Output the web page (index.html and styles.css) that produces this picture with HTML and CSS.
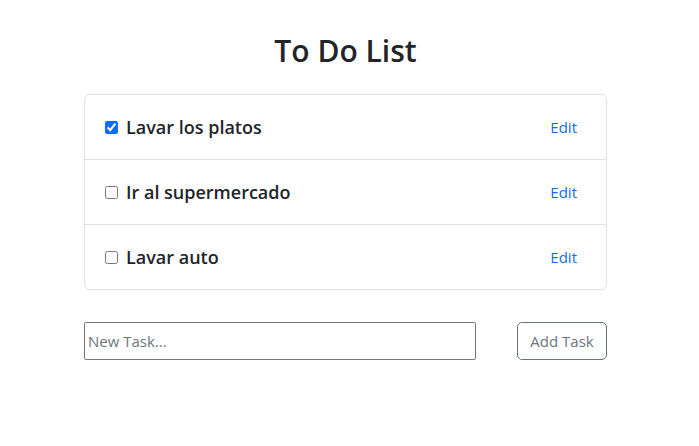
FILE: index.html
```html
<!DOCTYPE html>
<html lang="es">
<head>
<meta charset="utf-8">
<title>To Do List</title>
<link rel="stylesheet" href="styles.css">
</head>
<body>
<div class="app">
  <h1 class="title">To Do List</h1>
  <ul class="list">
    <li class="item">
      <label class="task"><input type="checkbox" class="check" checked><span>Lavar los platos</span></label>
      <a class="edit" href="#">Edit</a>
    </li>
    <li class="item">
      <label class="task"><input type="checkbox" class="check"><span>Ir al supermercado</span></label>
      <a class="edit" href="#">Edit</a>
    </li>
    <li class="item">
      <label class="task"><input type="checkbox" class="check"><span>Lavar auto</span></label>
      <a class="edit" href="#">Edit</a>
    </li>
  </ul>
  <form class="new-row">
    <input class="new-input" type="text" placeholder="New Task...">
    <button class="add-btn" type="button">Add Task</button>
  </form>
</div>
</body>
</html>
```

FILE: styles.css
```css
* { box-sizing: border-box; }
body {
  margin: 0;
  font-family: "Open Sans", "Noto Sans", sans-serif;
  color: #212529;
  background: #fff;
}
.app {
  width: 523px;
  margin-left: 84px;
  padding-top: 31px;
}
.title {
  margin: 0 0 23px;
  text-align: center;
  font-size: 30px;
  font-weight: 600;
  line-height: 40px;
}
.list {
  list-style: none;
  margin: 0;
  padding: 0;
  border: 1px solid #dee2e6;
  border-radius: 6px;
}
.item {
  display: flex;
  align-items: center;
  justify-content: space-between;
  height: 65px;
  padding: 0 29px 0 19px;
  border-top: 1px solid #dee2e6;
}
.item:first-child { border-top: 0; height: 64px; }
.task {
  display: flex;
  align-items: center;
  font-size: 18px;
  font-weight: 600;
}
.check {
  width: 13px;
  height: 13px;
  margin: 0 8px 0 1px;
  accent-color: #0d6efd;
}
.edit {
  color: #0d6efd;
  text-decoration: none;
  font-size: 15px;
}
.new-row {
  display: flex;
  justify-content: space-between;
  margin-top: 32px;
}
.new-input {
  width: 392px;
  height: 38px;
  padding: 0 3px;
  border: 1px solid #767676;
  border-radius: 2px;
  font-family: "Open Sans", sans-serif;
  font-size: 15px;
  color: #212529;
}
.new-input::placeholder { color: #6c757d; }
.add-btn {
  width: 90px;
  height: 38px;
  border: 1px solid #6c757d;
  border-radius: 5px;
  background: #fff;
  color: #6c757d;
  font-family: "Open Sans", sans-serif;
  font-size: 15px;
}
```
